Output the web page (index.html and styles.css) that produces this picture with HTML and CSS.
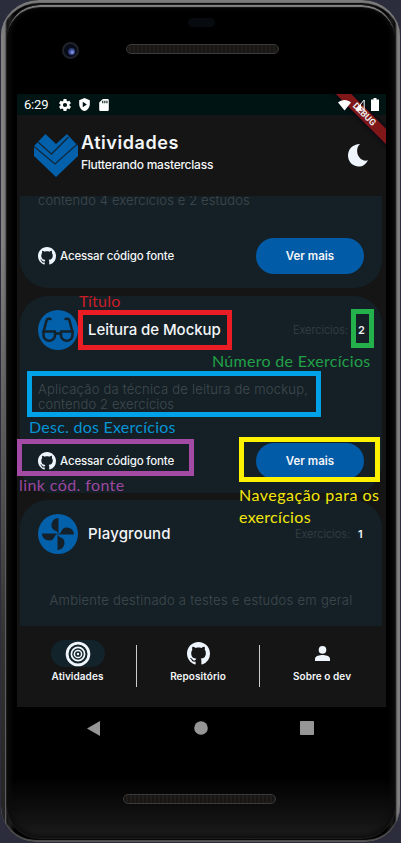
FILE: index.html
```html
<!DOCTYPE html>
<html lang="pt-BR">
<head>
<meta charset="utf-8">
<title>Atividades</title>
<link rel="stylesheet" href="styles.css">
</head>
<body>
<svg class="defs" width="0" height="0">
  <symbol id="github" viewBox="0 0 16 16"><path d="M8 0C3.58 0 0 3.58 0 8c0 3.54 2.29 6.53 5.47 7.59.4.07.55-.17.55-.38 0-.19-.01-.82-.01-1.49-2.01.37-2.53-.49-2.69-.94-.09-.23-.48-.94-.82-1.13-.28-.15-.68-.52-.01-.53.63-.01 1.08.58 1.23.82.72 1.21 1.87.87 2.33.66.07-.52.28-.87.51-1.07-1.78-.2-3.64-.89-3.64-3.95 0-.87.31-1.59.82-2.15-.08-.2-.36-1.02.08-2.12 0 0 .67-.21 2.2.82.64-.18 1.32-.27 2-.27s1.36.09 2 .27c1.53-1.04 2.2-.82 2.2-.82.44 1.1.16 1.92.08 2.12.51.56.82 1.27.82 2.15 0 3.07-1.87 3.75-3.65 3.95.29.25.54.73.54 1.48 0 1.07-.01 1.93-.01 2.2 0 .21.15.46.55.38A8.01 8.01 0 0 0 16 8c0-4.42-3.58-8-8-8z"/></symbol>
</svg>
<div class="phone">
  <div class="top">
    <div class="sensor"></div>
    <div class="camera"><i></i></div>
    <div class="speaker"></div>
  </div>
  <div class="screen">
    <div class="status">
      <span class="time">6:29</span>
      <svg class="s-gear" width="12" height="12" viewBox="2 2 20 20"><path d="M19.4 13a7.500 7.500 0 0 0 0-2l2.100-1.650a.5.5 0 0 0 .12-.64l-2-3.460a.5.5 0 0 0-.6-.22l-2.500 1a7.300 7.300 0 0 0-1.700-.98l-.37-2.650A.5.5 0 0 0 14 2h-4a.5.5 0 0 0-.5.42l-.37 2.650c-.6.250-1.180.580-1.700.980l-2.500-1a.5.5 0 0 0-.6.220l-2 3.460a.5.5 0 0 0 .120.640L4.560 11a7.500 7.500 0 0 0 0 2l-2.110 1.650a.5.5 0 0 0-.120.640l2 3.460c.120.220.380.300.600.220l2.500-1c.520.400 1.080.730 1.700.980l.370 2.650c.040.240.250.420.500.420h4c.250 0 .460-.180.500-.420l.370-2.650c.600-.250 1.170-.590 1.700-.980l2.500 1c.220.080.480 0 .600-.220l2-3.460a.5.5 0 0 0-.120-.640zM12 15.500a3.500 3.500 0 1 1 0-7 3.500 3.500 0 0 1 0 7z"/></svg>
      <svg class="s-shield" width="11" height="13" viewBox="3 1 18 22"><path fill-rule="evenodd" d="M12 1 3 5v6c0 5.550 3.840 10.740 9 12 5.160-1.260 9-6.450 9-12V5zM9 7.500v9l7-4.500z"/></svg>
      <svg class="s-sd" width="10" height="12" viewBox="4 2 16 20"><path fill-rule="evenodd" d="M18 2h-8L4 8v12a2 2 0 0 0 2 2h12a2 2 0 0 0 2-2V4a2 2 0 0 0-2-2zM9 5h1.800v4H9zm3.500 0h1.800v4h-1.800zM16 5h1.800v4H16z"/></svg>
      <div class="signal">
        <svg width="13" height="12" viewBox="0 0 13 12"><path d="M0 3.500C3.500 0 9.500 0 13 3.500L6.500 11.500z"/></svg>
        <svg width="10" height="12" viewBox="0 0 10 12"><path d="M9.200 1v10H.8z" fill="none" stroke="#fff"/><path d="M6 5v6.500H.5z"/></svg>
        <svg width="8" height="13" viewBox="0 0 8 13"><path d="M2.500 0h3v1.500H8V13H0V1.500h2.500z"/></svg>
      </div>
      <div class="debug"><span>DEBUG</span></div>
    </div>
    <header class="bar">
      <svg class="logo" width="44" height="44" viewBox="0 0 44 44"><path d="M0 13 11.500 1 22 11 33 1 44 13V23L22 44 0 23z" fill="#0360aa"/><path d="M0 13.500 21 31 44 10.500M4 9 17.500 21 34.500 4" fill="none" stroke="#10283c" stroke-width="1.300"/></svg>
      <div class="heading"><h1>Atividades</h1><p>Flutterando masterclass</p></div>
      <svg class="moon" width="20" height="23" viewBox="0 0 20 23"><path d="M12 0C8 3.500 8.500 10 11.500 13.500c2.200 2.800 5.500 3.800 8.500 2.800C17.500 21 14 23 10 22.500 4 22 0 17 0 11.500 0 5 5 0 12 0z" fill="#eef5fc"/></svg>
    </header>
    <main class="list">
      <section class="card first">
        <p class="desc d0">contendo 4 exercicios e 2 estudos</p>
        <div class="actions"><a class="src"><svg width="18" height="18"><use href="#github"/></svg><span>Acessar código fonte</span></a><a class="more"><span>Ver mais</span></a></div>
      </section>
      <section class="card second">
        <div class="head">
          <svg class="badge" width="40" height="40" viewBox="0 0 40 40"><circle cx="20" cy="20" r="20" fill="#0360aa"/><g fill="none" stroke="#14212a" stroke-width="2.500" stroke-linecap="round" stroke-linejoin="round"><path d="M12.500 9c-2-.8-3.600 0-4.100 2L5.500 22M27.500 9c2-.8 3.600 0 4.100 2L34.500 22"/><path d="M5.500 21.500h11.500v4a5.500 5 0 0 1-11.500 0zM23 21.500h11.500v4a5.500 5 0 0 1-11.500 0zM17 23.500h6"/></g></svg>
          <h2 class="t1">Leitura de Mockup</h2><span class="count c1">Exercicios:</span><b class="n1">2</b>
        </div>
        <p class="desc d1"><span class="l1">Aplicação da técnica de leitura de mockup,</span><br><span class="l2">contendo 2 exercícios</span></p>
        <div class="actions"><a class="src"><svg width="18" height="18"><use href="#github"/></svg><span>Acessar código fonte</span></a><a class="more"><span>Ver mais</span></a></div>
      </section>
      <section class="card third">
        <div class="head">
          <svg class="badge" width="40" height="40" viewBox="0 0 40 40"><circle cx="20" cy="20" r="20" fill="#0360aa"/><g fill="#14212a"><path d="M20.500 20.500C20 15.500 13.500 17.500 13.500 11.500 13.500 7 16.500 4 20.500 4z"/><path d="M20.500 20.500C20 15.500 13.500 17.500 13.500 11.500 13.500 7 16.500 4 20.500 4z" transform="rotate(90 20 20)"/><path d="M20.500 20.500C20 15.500 13.500 17.500 13.500 11.500 13.500 7 16.500 4 20.500 4z" transform="rotate(180 20 20)"/><path d="M20.500 20.500C20 15.500 13.500 17.500 13.500 11.500 13.500 7 16.500 4 20.500 4z" transform="rotate(270 20 20)"/></g></svg>
          <h2 class="t2">Playground</h2><span class="count c2">Exercicios:</span><b class="n2">1</b>
        </div>
        <p class="desc d2">Ambiente destinado a testes e estudos em geral</p>
      </section>
    </main>
    <nav class="tabs">
      <a class="tab a"><span class="ico pill"><svg width="26" height="26" viewBox="0 0 26 26"><g fill="none" stroke="#f0f6fb"><circle cx="13" cy="13" r="10.900" stroke-width="2.800"/><circle cx="13" cy="13" r="6.600" stroke-width="1.700"/><circle cx="13" cy="13" r="3.600" stroke-width="1.500"/></g><circle cx="13" cy="13" r="1.200" fill="#f0f6fb"/></svg></span><span class="label">Atividades</span></a>
      <i class="sep"></i>
      <a class="tab b"><span class="ico"><svg width="23" height="23"><use href="#github"/></svg></span><span class="label">Repositório</span></a>
      <i class="sep"></i>
      <a class="tab c"><span class="ico"><svg width="15" height="15" viewBox="0 0 15 15"><circle cx="7.500" cy="3.900" r="3.800"/><path d="M0 15v-2.200C0 10 5 9 7.500 9s7.500 1 7.500 3.800V15z"/></svg></span><span class="label">Sobre o dev</span></a>
    </nav>
  </div>
  <div class="keys">
    <svg width="13" height="15" viewBox="0 0 13 15"><path d="M13 0v15L0 7.500z"/></svg>
    <svg width="14" height="14" viewBox="0 0 14 14"><circle cx="7" cy="7" r="6.800"/></svg>
    <svg width="14" height="14" viewBox="0 0 14 14"><rect width="14" height="14" rx=".8"/></svg>
  </div>
  <div class="bottom"><div class="speaker"></div></div>
  <div class="note box red"></div><div class="note word w-title">Título</div>
  <div class="note box green"></div><div class="note word w-num">Número de Exercícios</div>
  <div class="note box blue"></div><div class="note word w-desc">Desc. dos Exercícios</div>
  <div class="note box purple"></div><div class="note word w-link">link cód. fonte</div>
  <div class="note box yellow"></div><div class="note word w-nav"><span>Navegação para os</span><br><span class="nav2">exercícios</span></div>
</div>
</body>
</html>
```
FILE: styles.css
```css
* { box-sizing: border-box; }
body { margin: 0; width: 401px; height: 843px; overflow: hidden; background: #2b2d3d; font-family: Inter, sans-serif; color: #f3f5f7; }
h1, h2, p { margin: 0; font-weight: 500; }
svg { display: block; fill: currentColor; flex: none; }
.defs { position: absolute; }
span, h1, h2, p { white-space: nowrap; }
.phone { position: relative; width: 399px; height: 842px; margin-left: 1px; padding: 0 13px 0 16px; border-radius: 38px 38px 34px 34px / 36px 36px 36px 36px; background: linear-gradient(90deg, #8b8b8b 0, #777 4px, #111 6px, #1f1f1f 9px, #000 14px, #000 385px, #191919 391px, #080808 394px, #777 396px, #888 399px); overflow: hidden; box-shadow: inset 0 3px 1px #7b7b7b, inset 0 -2px 1px #555; }
.phone::before { content: ""; position: absolute; left: 5px; top: 4px; right: 4px; bottom: 3px; border-radius: 34px; border: 1px solid #1c1c1c; background: linear-gradient(#000 0, #000 772px, #141414 818px, #1f1f1f 834px); box-shadow: inset 0 3px 1px -1px #858585, inset 0 0 5px 3px #0d0d0d; }
.phone::after { content: ""; position: absolute; left: 0; top: 240px; width: 4px; height: 602px; background: linear-gradient(#8b8b8b00, #333 400px, #222); }
.top, .bottom, .screen, .keys { position: relative; }
.top { height: 94px; }
.sensor { position: absolute; left: 171px; top: 18px; width: 27px; height: 9px; border-radius: 5px; background: #070b0f; }
.camera { position: absolute; left: 45px; top: 42px; width: 17px; height: 17px; border-radius: 50%; background: #080c18; border: 2px solid #20232a; }
.camera i { position: absolute; left: 4px; top: 4px; width: 7px; height: 7px; border-radius: 50%; background: radial-gradient(circle at 60% 60%, #a4adfa 0, #4656a0 35%, #18265a 80%); }
.speaker { width: 153px; height: 10px; border: 1px solid #3a3a38; border-radius: 5px; background: repeating-linear-gradient(90deg, #171615 0, #171615 2px, #201d1b 2px, #201d1b 4px); }
.top .speaker { position: absolute; left: 109px; top: 44px; }
.screen { width: 369px; height: 613px; background: #151515; overflow: hidden; display: flex; flex-direction: column; }
.status { height: 21px; background: #001413; display: flex; align-items: center; padding-left: 7px; flex: none; color: #fff; }
.time { font: 13px/20px Roboto, sans-serif; width: 35px; letter-spacing: -.2px; }
.s-gear { margin-right: 8px; }
.s-shield { margin-right: 9px; }
.signal { display: flex; align-items: center; gap: 6px; margin-left: auto; padding-right: 7px; position: relative; z-index: 2; }
.signal svg:nth-child(2) { margin-left: -2px; }
.debug { position: absolute; right: -28px; top: 15px; width: 100px; height: 11px; transform: rotate(45deg); background: #7f1719; box-shadow: 0 0 5px #000014; text-align: center; }
.debug span { display: block; font: bold 9px/11px Roboto, sans-serif; letter-spacing: -.1px; color: #eee; }
.bar { height: 81px; flex: none; display: flex; padding: 18px 17px 0; }
.heading { margin: 0 0 0 3px; }
h1 { font-size: 18px; line-height: 22px; font-weight: 600; margin-top: -1px; letter-spacing: .55px; }
.heading p { font-size: 12px; line-height: 16px; margin-top: 3px; letter-spacing: -.24px; }
.moon { margin: 11px 1px 0 auto; }
.list { height: 430px; flex: none; padding: 0 4px 0 3px; display: flex; flex-direction: column; }
.card { background: #152026; padding: 0 18px; border-radius: 28px; flex: none; }
.first { height: 92px; border-radius: 0 0 28px 28px; overflow: hidden; }
.second { height: 197px; margin-top: 8px; }
.third { height: 126px; margin-top: 7px; border-radius: 28px 28px 0 0; }
.desc { color: #3f4a4f; font-weight: 300; font-size: 13px; line-height: 15px; }
.d0 { height: 42px; padding-top: 0; margin-top: -3px; margin-bottom: 3px; letter-spacing: .12px; }
.l1 { letter-spacing: .24px; }
.l2 { letter-spacing: .14px; }
.actions { display: flex; align-items: center; justify-content: space-between; height: 36px; }
.src { display: flex; align-items: center; gap: 4px; }
.src svg { color: #eef5fc; }
.src span { font-size: 11.500px; line-height: 16px; font-weight: 500; letter-spacing: -.15px; }
.more { width: 108px; height: 36px; border-radius: 18px; background: #015ba7; display: flex; justify-content: center; align-items: center; }
.more span { font-size: 11.500px; line-height: 16px; font-weight: 600; }
.head { display: flex; height: 68px; padding-top: 14px; }
.head h2 { font-size: 15px; line-height: 20px; margin: 10px 0 0 10px; }
.t1 { letter-spacing: -.05px; }
.t2 { letter-spacing: .15px; }
.count { margin-left: auto; font-size: 11px; font-weight: 300; color: #364147; line-height: 16px; margin-top: 12px; }
.head b { font-size: 11px; line-height: 16px; font-weight: 600; width: 6px; margin: 12px 0 0 10px; }
.head .c2 { margin-right: -2px; }
.head .n2 { margin-left: 10px; }
.d1 { margin-top: 18px; height: 61px; }
.d2 { margin-top: 25px; text-align: center; letter-spacing: .28px; }
.tabs { display: flex; height: 81px; padding: 14px 0 0; }
.tab { display: flex; flex-direction: column; align-items: center; width: 122px; }
.ico { height: 27px; width: 54px; border-radius: 14px; display: flex; align-items: center; justify-content: center; color: #eef5fc; }
.pill { background: #12232b; }
.label { font-size: 10px; line-height: 14px; font-weight: 600; margin-top: 2px; letter-spacing: .06px; }
.tab.a { width: 119px; padding-left: 2px; }
.tab.c { width: 124px; }
.sep { width: 1px; height: 42px; margin-top: 5px; background: #ccc; }
.keys { height: 42px; display: flex; color: #969696; padding: 14px 0 0 70px; }
.keys svg:nth-child(2) { margin-left: 94px; }
.keys svg:nth-child(3) { margin-left: 92px; }
.bottom { height: 94px; padding: 45px 0 0 106px; }
.note { position: absolute; z-index: 3; }
.box { border: 5px solid; }
.red { left: 77px; top: 310px; width: 154px; height: 40px; border-color: #ea1d25; }
.green { left: 350px; top: 309px; width: 23px; height: 39px; border-color: #24b14c; }
.blue { left: 26px; top: 371px; width: 294px; height: 46px; border-color: #02a2e8; }
.purple { left: 16px; top: 439px; width: 177px; height: 37px; border-color: #a34aa4; }
.yellow { left: 238px; top: 437px; width: 141px; height: 45px; border-color: #fff200; }
.word { font: 16px/22px Lato, sans-serif; }
.w-title { left: 78px; top: 290px; color: #ca1d27; letter-spacing: .2px; }
.w-num { left: 211px; top: 350px; color: #21a148; letter-spacing: .3px; }
.w-desc { left: 28px; top: 416px; color: #0594d5; letter-spacing: .25px; }
.w-link { left: 18px; top: 474px; color: #9c47a0; letter-spacing: .4px; }
.w-nav { left: 238px; top: 484px; color: #f3e70c; letter-spacing: .5px; }
.nav2 { letter-spacing: .3px; }
```
